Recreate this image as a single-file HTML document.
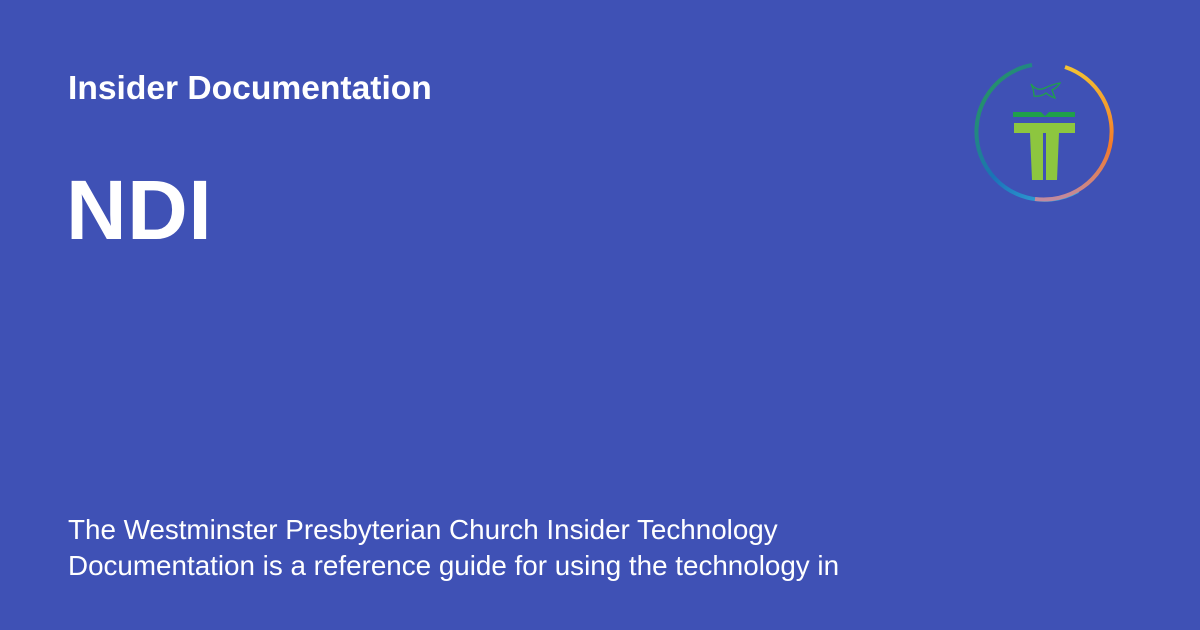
<!DOCTYPE html>
<html><head><style>
body{margin:0;width:1200px;height:630px;background:#3f51b5;font-family:"Liberation Sans",Roboto,sans-serif;color:#fff;position:relative;overflow:hidden}
.t1{position:absolute;left:68px;top:70px;font-size:33.6px;font-weight:bold}
.t2{position:absolute;left:66px;top:162px;font-size:84px;font-weight:bold;letter-spacing:0.5px}
.t3{position:absolute;left:68px;top:512px;font-size:27.8px;line-height:36px}
</style></head><body>
<div class="t1">Insider Documentation</div>
<div class="t2">NDI</div>
<div class="t3">The Westminster Presbyterian Church Insider Technology<br>Documentation is a reference guide for using the technology in</div>
<svg style="position:absolute;left:960px;top:50px" width="170" height="170" viewBox="960 50 170 170">
<defs>
<linearGradient id="g1" x1="0" y1="0" x2="1" y2="1"><stop offset="0" stop-color="#2a9d4a"/><stop offset="0.5" stop-color="#1a73b8"/><stop offset="1" stop-color="#3ab0e0"/></linearGradient>
<linearGradient id="g2" x1="0" y1="0" x2="0" y2="1"><stop offset="0" stop-color="#f3c232"/><stop offset="0.6" stop-color="#f47a2a"/><stop offset="1" stop-color="#c08aa0"/></linearGradient>
</defs>
<path d="M1032 65 A68 68 0 1 0 1078 191" fill="none" stroke="url(#g1)" stroke-width="4"/>
<path d="M1065 67 A68 68 0 0 1 1035 199" fill="none" stroke="url(#g2)" stroke-width="4"/>
<path d="M1031 84 q6 8 14 4 q8 -4 15 -5 q-3 5 -8 7 l3 8 q-6 -2 -9 -5 q-5 4 -12 3 q0 -6 -3 -12z" fill="none" stroke="#1fa04a" stroke-width="1.3"/>
<path d="M1013 112 h28 l4 4 l4 -4 h26 v5 h-62z" fill="#1fa04a"/>
<rect x="1014" y="123" width="61" height="10" fill="#8dc63f"/>
<path d="M1030 133 h13 v47 h-11z M1046 133 h13 l-2 47 h-11z" fill="#8dc63f"/>
</svg>
</body></html>
